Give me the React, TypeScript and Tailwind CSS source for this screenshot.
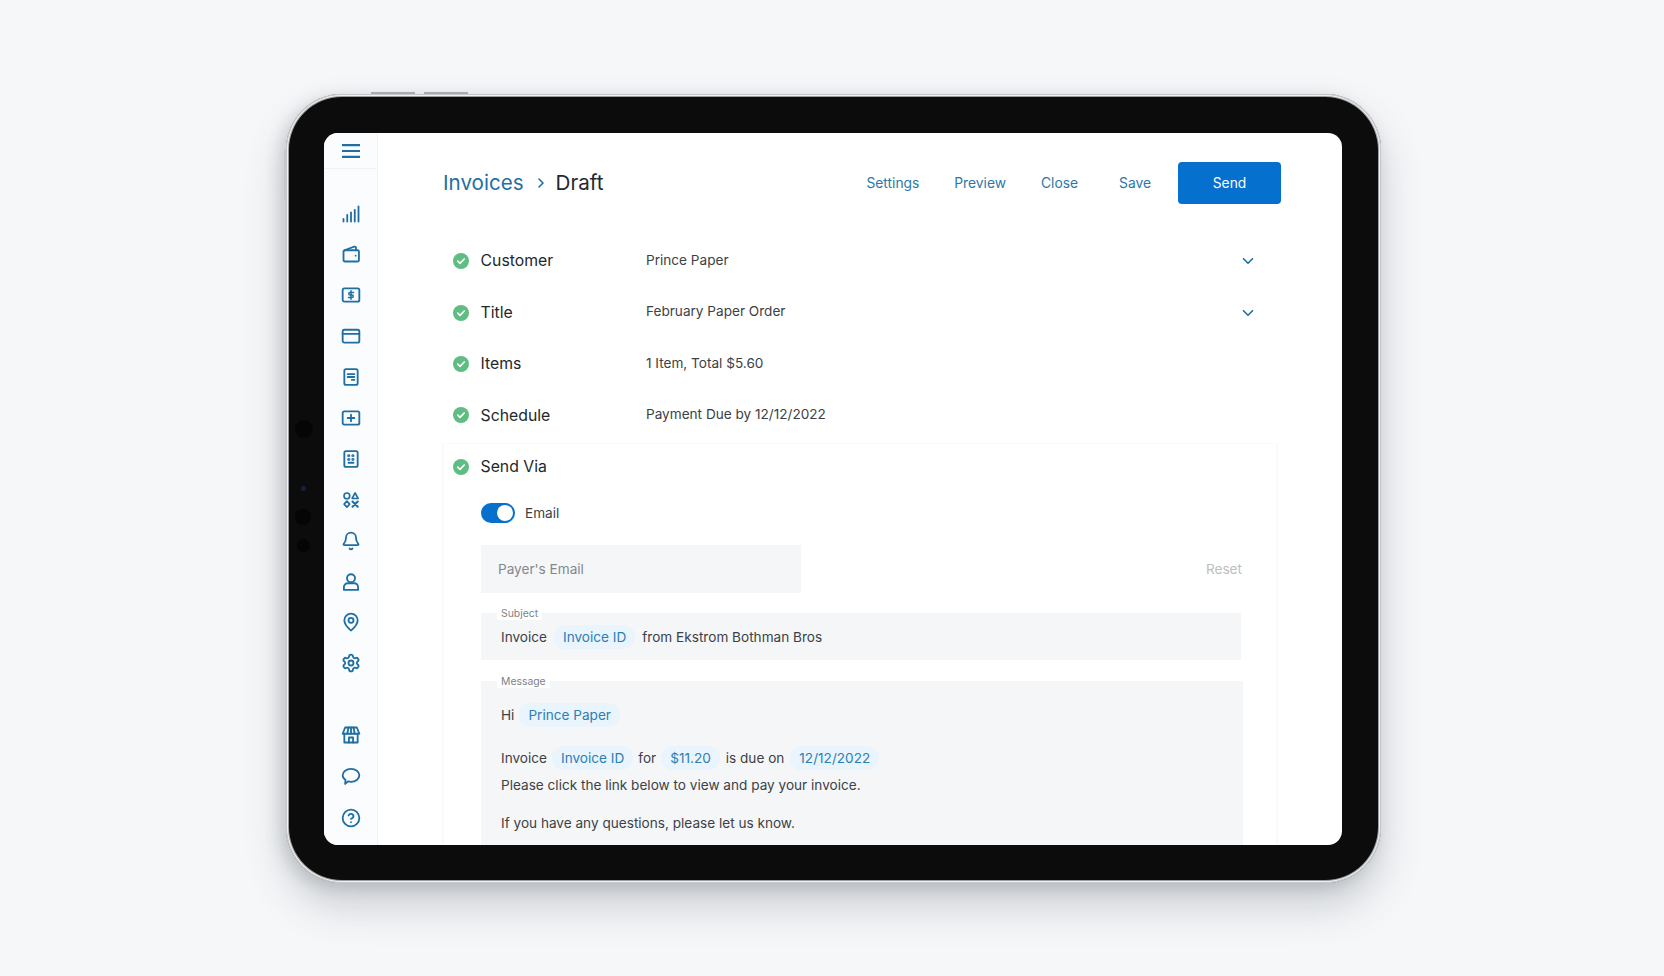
import React from 'react';
import { Bell, ChevronDown, ChevronRight, CircleHelp, MapPin, Settings } from 'lucide-react';

const svgProps = {
  width: 20,
  height: 20,
  viewBox: '0 0 24 24',
  fill: 'none',
  stroke: 'currentColor',
  strokeWidth: 2.2,
  strokeLinecap: 'round' as const,
  strokeLinejoin: 'round' as const,
};

const BarsIcon = () => (
  <svg {...svgProps}>
    <path d="M3 21v-3M7.5 21v-8M12 21V10M16.5 21V7M21 21V3" />
  </svg>
);
const WalletIcon = () => (
  <svg {...svgProps}>
    <path d="M3 9.5a2 2 0 0 1 2-2h15a1.5 1.5 0 0 1 1.5 1.5v10.5a1.5 1.5 0 0 1-1.5 1.5H5a2 2 0 0 1-2-2z" />
    <path d="M4 7.5 16 3.2a1.5 1.5 0 0 1 2 1.4v2.9" />
    <path d="M17.5 14h.01" />
  </svg>
);
const MoneyIcon = () => (
  <svg {...svgProps}>
    <rect x="2" y="4" width="20" height="16" rx="2" />
    <path d="M12 6.800v10.400M15 9H10.800a1.500 1.500 0 0 0 0 3h2.400a1.500 1.500 0 0 1 0 3H9" strokeWidth="1.800" />
  </svg>
);
const CardIcon = () => (
  <svg {...svgProps}>
    <rect x="2" y="4.5" width="20" height="15.5" rx="2" />
    <path d="M2 9.5h20" />
  </svg>
);
const ReceiptIcon = () => (
  <svg {...svgProps}>
    <rect x="4" y="2.5" width="16" height="19" rx="2" />
    <path d="M8 8.5h8M8 12h8M13 15.5h3" />
  </svg>
);
const PlusBoxIcon = () => (
  <svg {...svgProps}>
    <rect x="2" y="4" width="20" height="16" rx="2" />
    <path d="M12 8v8M8 12h8" />
  </svg>
);
const CalcIcon = () => (
  <svg {...svgProps}>
    <rect x="4" y="2.5" width="16" height="19" rx="2" />
    <rect x="8.5" y="7" width="2" height="2" fill="currentColor" strokeWidth="1" />
    <rect x="13.5" y="7" width="2" height="2" fill="currentColor" strokeWidth="1" />
    <rect x="8.5" y="11.5" width="2" height="2" fill="currentColor" strokeWidth="1" />
    <rect x="13.5" y="11.5" width="2" height="2" fill="currentColor" strokeWidth="1" />
    <path d="M9 16.5h6" />
  </svg>
);
const ShapesIcon = () => (
  <svg {...svgProps} width={18} height={18}>
    <circle cx="6.5" cy="6.5" r="3.8" />
    <path d="M17.5 2.5 21.5 10h-8z" />
    <path d="M6.5 13.5 10.2 17.5 6.5 21.5 2.8 17.5z" />
    <path d="m14 14 7 7M21 14l-7 7" strokeWidth="2.8" />
  </svg>
);
const UserIcon = () => (
  <svg {...svgProps}>
    <circle cx="12" cy="7.5" r="4.8" />
    <path d="M3.5 21.5v-3.5A4.5 4.5 0 0 1 8 13.5h8a4.5 4.5 0 0 1 4.5 4.5v3.5z" />
  </svg>
);
const StoreIcon = () => (
  <svg {...svgProps}>
    <path d="M5 3h14l3 7.5H2z" />
    <path d="M9 3 7.5 10.5M15 3l1.5 7.5M12 3v7.5" />
    <path d="M4 11v10h16V11" />
    <path d="M9.5 21v-6h5v6" />
  </svg>
);
const ChatIcon = () => (
  <svg {...svgProps}>
    <path d="M12 3.500c5.500 0 10 3.300 10 7.700S17.500 19 12 19c-1.200 0-2.400-.2-3.500-.5L5 21.500l.4-4.600C3.300 15.500 2 13.500 2 11.200 2 6.800 6.500 3.500 12 3.500z" />
  </svg>
);
const MenuIcon = () => (
  <svg width="18" height="14" viewBox="0 0 18 14" fill="none" stroke="currentColor" strokeWidth="2.2">
    <path d="M0 1.100h18M0 7h18M0 12.900h18" />
  </svg>
);

const navIcons = [
  { key: 'bars', el: <BarsIcon /> },
  { key: 'wallet', el: <WalletIcon /> },
  { key: 'money', el: <MoneyIcon /> },
  { key: 'card', el: <CardIcon /> },
  { key: 'receipt', el: <ReceiptIcon /> },
  { key: 'plus', el: <PlusBoxIcon /> },
  { key: 'calc', el: <CalcIcon /> },
  { key: 'shapes', el: <ShapesIcon /> },
  { key: 'bell', el: <Bell size={20} strokeWidth={2.2} /> },
  { key: 'user', el: <UserIcon /> },
  { key: 'pin', el: <MapPin size={20} strokeWidth={2.2} /> },
  { key: 'settings', el: <Settings size={20} strokeWidth={2.2} /> },
];

const bottomIcons = [
  { key: 'store', el: <StoreIcon /> },
  { key: 'chat', el: <ChatIcon /> },
  { key: 'help', el: <CircleHelp size={20} strokeWidth={2.2} /> },
];

function Check() {
  return (
    <svg width="16" height="16" viewBox="0 0 16 16" className="shrink-0">
      <circle cx="8" cy="8" r="8" fill="#5fbc82" />
      <path d="m4.800 8.200 2.200 2.100 4.200-4.300" fill="none" stroke="#fff" strokeWidth="1.700" strokeLinecap="round" strokeLinejoin="round" />
    </svg>
  );
}

function Row({ label, value, open }: { label: string; value: string; open?: boolean }) {
  return (
    <div className="flex h-[51.4px] items-center pl-[10px] pr-[24px]">
      <Check />
      <span className="ml-[11.5px] w-[165.5px] text-[15.8px] font-normal text-[#24282c]">{label}</span>
      <span className="-mt-[2px] flex-1 text-[13.6px] text-[#3c4146]">{value}</span>
      {open && <ChevronDown size={18} strokeWidth={2.2} className="text-[#1f6fa3]" />}
    </div>
  );
}

function Chip({ children, className = '' }: { children: React.ReactNode; className?: string }) {
  return (
    <span className={`inline-flex h-[24px] items-center rounded-[12px] bg-[#e9f4fc] px-[9px] text-[#2b7fb5] ${className}`}>
      {children}
    </span>
  );
}

export default function App() {
  return (
    <div
      className="h-[976px] w-[1664px] overflow-hidden bg-[#f6f7f9] pl-[286px] pt-[94px] text-[13.6px] text-[#3c4146]"
      style={{ fontFamily: 'Inter, "Liberation Sans", sans-serif' }}
    >
      {/* tablet body */}
      <div className="relative h-[789px] w-[1095px] rounded-[56px] bg-[#0c0c0c] pb-[38px] pl-[38px] pr-[39px] pt-[39px] shadow-[inset_0_0_0_1px_#c4c6c9,inset_0_0_0_2px_#f1f2f3,inset_0_0_0_3px_#9a9c9f,0_22px_42px_rgba(60,70,85,0.24),-5px_4px_16px_rgba(60,70,85,0.18)]">
        {/* hardware buttons and camera */}
        <div className="absolute -top-[2px] left-[85px] h-[2px] w-[44px] bg-[#a9abae]" />
        <div className="absolute -top-[2px] left-[138px] h-[2px] w-[44px] bg-[#a9abae]" />
        <div className="absolute -left-[2px] top-[56px] h-[50px] w-[2px] bg-[#c6c8cb]" />
        <div className="absolute left-[9px] top-[326px] h-[18px] w-[18px] rounded-full bg-[#050505]" />
        <div className="absolute left-[15px] top-[392px] h-[5px] w-[5px] rounded-full bg-[#13233a]" />
        <div className="absolute left-[9px] top-[415px] h-[16px] w-[16px] rounded-full bg-[#050505]" />
        <div className="absolute left-[11px] top-[445px] h-[13px] w-[13px] rounded-full bg-[#050505]" />

        {/* screen */}
        <div className="flex h-[712px] w-[1018px] overflow-hidden rounded-[14px] bg-white">
          <aside className="flex w-[54px] shrink-0 flex-col items-center border-r border-[#eff1f3] bg-[#fbfcfd] text-[#1f6fa3]">
            <div className="flex h-[36px] w-full items-center justify-center border-b border-[#eff1f3]">
              <MenuIcon />
            </div>
            <div className="mt-[34.5px] flex flex-col gap-[20.9px]">
              {navIcons.map(icon => (
                <div key={icon.key} className="flex h-[20px] w-[20px] items-center justify-center">
                  {icon.el}
                </div>
              ))}
            </div>
            <div className="mt-[51.5px] flex flex-col gap-[21.5px]">
              {bottomIcons.map(icon => (
                <div key={icon.key} className="flex h-[20px] w-[20px] items-center justify-center">
                  {icon.el}
                </div>
              ))}
            </div>
          </aside>

          <main className="min-w-0 flex-1 pl-[65px] pr-[61px] pt-[29px]">
            {/* header */}
            <div className="flex h-[42px] items-center">
              <span className="text-[20.6px] text-[#1f6fa3]">Invoices</span>
              <ChevronRight size={16} strokeWidth={2.4} className="ml-[9px] text-[#1f6fa3]" />
              <span className="ml-[7px] text-[20.6px] text-[#24282c]">Draft</span>
              <div className="ml-auto flex items-center text-[13.8px] text-[#2c77a8]">
                <span>Settings</span>
                <span className="ml-[35px]">Preview</span>
                <span className="ml-[35px]">Close</span>
                <span className="ml-[41px]">Save</span>
                <button className="ml-[27px] h-[42px] w-[103px] rounded-[4px] bg-[#0670cf] text-[13.8px] text-white">Send</button>
              </div>
            </div>

            {/* rows */}
            <div className="mt-[31.5px]">
              <Row label="Customer" value="Prince Paper" open />
              <Row label="Title" value="February Paper Order" open />
              <Row label="Items" value="1 Item, Total $5.60" />
              <Row label="Schedule" value="Payment Due by 12/12/2022" />
            </div>

            {/* send via */}
            <div className="-ml-[1px] mt-[1.5px] w-[836px] border-l-2 border-r-2 border-t border-[#f9fafa] pb-[30px]">
              <div className="flex h-[46px] items-center pl-[9px]">
                <Check />
                <span className="ml-[11.5px] text-[15.8px] font-normal text-[#24282c]">Send Via</span>
              </div>
              <div className="pl-[37px]">
                <div className="mt-[13px] flex items-center">
                  <div className="flex h-[20px] w-[34px] items-center justify-end rounded-full bg-[#0670cf] pr-[2px]">
                    <div className="h-[16px] w-[16px] rounded-full bg-white" />
                  </div>
                  <span className="ml-[10px]">Email</span>
                </div>

                <div className="mt-[22px] flex w-[761px] items-center justify-between">
                  <div className="flex h-[48px] w-[320px] items-center bg-[#f5f6f8] pl-[17px] text-[#83888e]">Payer's Email</div>
                  <span className="text-[#bcbec1]">Reset</span>
                </div>

                <div className="relative mt-[20px] flex h-[47px] w-[760px] items-center bg-[#f5f6f8] pl-[20px] pt-[1px]">
                  <span className="absolute -top-[6px] left-[16px] bg-white px-[4px] text-[10.4px] leading-[13px] text-[#7d8288]">Subject</span>
                  <span>Invoice</span>
                  <Chip className="ml-[7px]">Invoice ID</Chip>
                  <span className="ml-[7px]">from Ekstrom Bothman Bros</span>
                </div>

                <div className="relative mt-[21px] h-[200px] w-[762px] bg-[#f5f6f8] pl-[20px] pt-[22px]">
                  <span className="absolute -top-[6px] left-[16px] bg-white px-[4px] text-[10.4px] leading-[13px] text-[#7d8288]">Message</span>
                  <div className="flex items-center">
                    <span>Hi</span>
                    <Chip className="ml-[5px]">Prince Paper</Chip>
                  </div>
                  <div className="mt-[19px] flex items-center">
                    <span>Invoice</span>
                    <Chip className="ml-[5px]">Invoice ID</Chip>
                    <span className="ml-[5px]">for</span>
                    <Chip className="ml-[5px]">$11.20</Chip>
                    <span className="ml-[6px]">is due on</span>
                    <Chip className="ml-[6px]">12/12/2022</Chip>
                  </div>
                  <p className="mt-[5px] leading-[20px]">Please click the link below to view and pay your invoice.</p>
                  <p className="mt-[18px] leading-[20px]">If you have any questions, please let us know.</p>
                </div>
              </div>
            </div>
          </main>
        </div>
      </div>
    </div>
  );
}
